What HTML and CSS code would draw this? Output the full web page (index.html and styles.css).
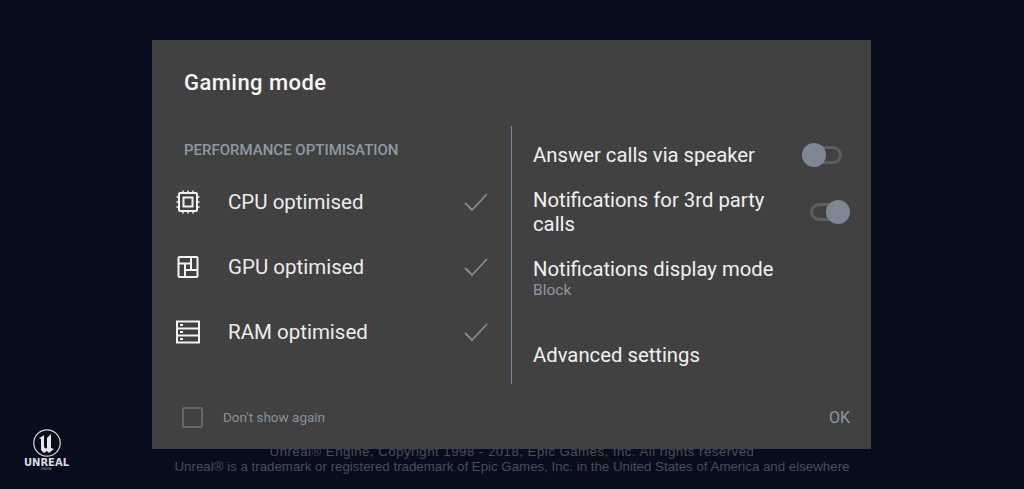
FILE: index.html
```html
<!DOCTYPE html>
<html lang="en">
<head>
    <meta charset="UTF-8">
    <meta name="viewport" content="width=device-width, initial-scale=1.0">
    <title>Gaming mode</title>
    <link rel="stylesheet" href="styles.css">
</head>
<body>
    <div class="backdrop">
        <div class="engine-logo">
            <svg width="28" height="28" viewBox="0 0 28 28">
                <circle cx="14" cy="14" r="13.200" fill="none" stroke="#d8d8d8" stroke-width="1.2"/>
                <path d="M6 9c2-1 4-2 5-3v11c0 2 2 3 3 2V9l4-4v14l3 1-5 4-2-2-3 2-3-3V10z" fill="#e6e6e6"/>
            </svg>
            <div class="engine-name">UNREAL</div>
            <div class="engine-sub">ENGINE</div>
        </div>
        <div class="legal">
            <div class="legal-first">Unreal® Engine, Copyright 1998 - 2018, Epic Games, Inc. All rights reserved</div>
            <div>Unreal® is a trademark or registered trademark of Epic Games, Inc. in the United States of America and elsewhere</div>
        </div>
    </div>

    <div class="dialog">
        <h1 class="dialog-title">Gaming mode</h1>

        <div class="dialog-body">
            <div class="col-left">
                <div class="section-label">PERFORMANCE OPTIMISATION</div>

                <div class="opt-row">
                    <svg class="opt-icon" viewBox="0 0 24 24" fill="none" stroke="#f2f2f2" stroke-width="2">
                        <rect x="3" y="3" width="18" height="18" rx="1"/>
                        <rect x="7.500" y="7.500" width="9" height="9"/>
                        <path d="M7 0.500V3M12 0.500V3M17 0.500V3M7 21v2.500M12 21v2.500M17 21v2.500M0.500 7H3M0.500 12H3M0.500 17H3M21 7h2.500M21 12h2.500M21 17h2.500" stroke-width="1.500"/>
                    </svg>
                    <span class="opt-text">CPU optimised</span>
                    <svg class="opt-check" viewBox="0 0 24 18" fill="none" stroke="#7f8c99" stroke-width="1.800"><path d="M1 10l7 7L23 1"/></svg>
                </div>

                <div class="opt-row">
                    <svg class="opt-icon" viewBox="0 0 24 24" fill="none" stroke="#f2f2f2" stroke-width="2">
                        <rect x="2.500" y="2" width="19" height="20" rx="1"/>
                        <path d="M2.500 8.500H15V2M15 8.500v6.500M9 15H21.500M9 8.500V22"/>
                    </svg>
                    <span class="opt-text">GPU optimised</span>
                    <svg class="opt-check" viewBox="0 0 24 18" fill="none" stroke="#7f8c99" stroke-width="1.800"><path d="M1 10l7 7L23 1"/></svg>
                </div>

                <div class="opt-row">
                    <svg class="opt-icon" viewBox="0 0 24 24" fill="none" stroke="#f2f2f2" stroke-width="2">
                        <rect x="1" y="1.500" width="22" height="21"/>
                        <path d="M1 8.500h22M1 15.500h22M4 5h3M4 12h3M4 19h3"/>
                    </svg>
                    <span class="opt-text">RAM optimised</span>
                    <svg class="opt-check" viewBox="0 0 24 18" fill="none" stroke="#7f8c99" stroke-width="1.800"><path d="M1 10l7 7L23 1"/></svg>
                </div>
            </div>

            <div class="col-right">
                <div class="setting setting-speaker">
                    <span class="setting-text">Answer calls via speaker</span>
                    <div class="toggle"><div class="toggle-knob"></div></div>
                </div>
                <div class="setting setting-third">
                    <span class="setting-text setting-text-wrap">Notifications for 3rd party calls</span>
                    <div class="toggle toggle-on"><div class="toggle-knob"></div></div>
                </div>
                <div class="setting-stack">
                    <span class="setting-text">Notifications display mode</span>
                    <span class="setting-sub">Block</span>
                </div>
                <div class="setting-advanced">
                    <span class="setting-text">Advanced settings</span>
                </div>
            </div>
        </div>

        <div class="dialog-footer">
            <div class="checkbox"></div>
            <span class="dont-show">Don't show again</span>
            <span class="ok-btn">OK</span>
        </div>
    </div>
</body>
</html>
```

FILE: styles.css
```css
* {
    box-sizing: border-box;
}

body {
    margin: 0;
    width: 1024px;
    height: 489px;
    overflow: hidden;
    position: relative;
    background-color: #080d1e;
    font-family: Roboto, "Liberation Sans", sans-serif;
}

.backdrop {
    height: 489px;
    display: flex;
    align-items: flex-end;
    padding: 0 0 15px 23px;
}

.engine-logo {
    width: 47px;
    display: flex;
    flex-direction: column;
    align-items: center;
    margin-bottom: 3px;
    color: #dcdcdc;
}

.engine-logo svg {
    display: block;
}

.engine-name {
    font-family: "DejaVu Sans", sans-serif;
    font-size: 10px;
    font-weight: bold;
    line-height: 9px;
    margin-top: 1px;
}

.engine-sub {
    font-size: 3px;
    line-height: 4px;
    color: #8a8a8a;
}

.legal {
    margin-left: 102px;
    width: 680px;
    text-align: center;
    font-family: "Liberation Sans", Arial, sans-serif;
    font-size: 13.300px;
    line-height: 15px;
    color: #4a4c57;
    white-space: nowrap;
}

.legal-first {
    letter-spacing: .45px;
}

.dialog {
    position: absolute;
    left: 152px;
    top: 40px;
    width: 719px;
    height: 409px;
    background-color: #414141;
    color: #f2f2f2;
}

.dialog-title {
    margin: 0;
    padding: 30px 0 0 32px;
    font-size: 22px;
    font-weight: 500;
    letter-spacing: .45px;
    line-height: 26px;
    color: #f5f5f5;
}

.dialog-body {
    display: flex;
    height: 258px;
    margin-top: 30px;
}

.col-left {
    width: 359px;
    padding: 0 23px 0 24px;
}

.section-label {
    padding: 15px 0 0 8px;
    margin-bottom: 10px;
    font-size: 15px;
    font-weight: 500;
    line-height: 18px;
    color: #8e99a5;
}

.opt-row {
    display: flex;
    align-items: center;
    height: 65.300px;
}

.opt-icon {
    width: 24px;
    height: 24px;
    flex-shrink: 0;
}

.opt-text {
    margin-left: 28px;
    font-size: 20.500px;
    color: #ececec;
    flex: 1;
}

.opt-check {
    width: 24px;
    height: 18px;
    flex-shrink: 0;
}

.col-right {
    flex: 1;
    border-left: 1px solid #7c8791;
    padding: 0 21px 0 21px;
}

.setting-text {
    font-size: 20.300px;
    line-height: 24px;
    color: #f0f0f0;
}

.setting {
    display: flex;
    justify-content: space-between;
    align-items: center;
}

.setting-speaker {
    padding-top: 17px;
}

.setting-third {
    margin-top: 21px;
}

.setting-text-wrap {
    width: 250px;
}

.setting-stack {
    display: flex;
    flex-direction: column;
    margin-top: 21px;
}

.setting-sub {
    font-size: 15.500px;
    line-height: 18px;
    color: #8e99a5;
}

.setting-advanced {
    margin-top: 44px;
}

.toggle {
    width: 40px;
    height: 18px;
    border: 3px solid #5e5e5e;
    border-radius: 9px;
    position: relative;
    margin-right: 8px;
}

.toggle-knob {
    position: absolute;
    left: -3px;
    top: -6px;
    width: 24px;
    height: 24px;
    border-radius: 50%;
    background-color: #7d8894;
}

.toggle-on {
    margin-right: 0;
}

.toggle-on .toggle-knob {
    left: auto;
    right: -3px;
}

.dialog-footer {
    display: flex;
    align-items: center;
    padding: 23px 21px 0 30px;
}

.checkbox {
    width: 21px;
    height: 21px;
    border: 2px solid #666;
    border-radius: 2px;
}

.dont-show {
    margin-left: 20px;
    margin-bottom: 2px;
    font-size: 13.500px;
    color: #88929d;
    flex: 1;
}

.ok-btn {
    font-size: 16px;
    color: #8e99a5;
}
```
